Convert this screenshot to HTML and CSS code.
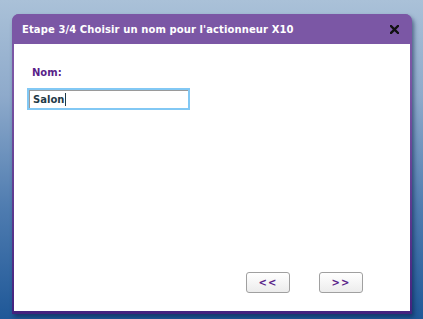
FILE: index.html
```html
<!DOCTYPE html>
<html>
<head>
<meta charset="utf-8">
<link rel="stylesheet" href="styles.css">
</head>
<body>
<div class="dialog">
  <div class="titlebar">
    <span class="title">Etape 3/4 Choisir un nom pour l'actionneur X10</span>
    <svg class="close" width="9" height="9" viewBox="0 0 9 9"><path d="M1 1L8 8M8 1L1 8" stroke="#111" stroke-width="2.4" stroke-linecap="square"/></svg>
  </div>
  <div class="content">
    <div class="form">
      <label class="label">Nom:</label>
      <div class="input"><span class="value">Salon</span><span class="caret"></span></div>
    </div>
    <div class="buttons">
      <button class="btn">&lt;&lt;</button>
      <button class="btn">&gt;&gt;</button>
    </div>
  </div>
</div>
</body>
</html>
```
FILE: styles.css
```css
html, body {
  margin: 0;
  padding: 0;
  width: 423px;
  height: 319px;
  overflow: hidden;
}
body {
  background: linear-gradient(to bottom, #aac1d8 0%, #8eaacb 30%, #4f7cb0 65%, #1f5898 100%);
  font-family: "DejaVu Sans", Verdana, sans-serif;
  padding: 14px 11px 0 12px;
  box-sizing: border-box;
}
.dialog {
  width: 400px;
  height: 300px;
  border-radius: 7px 7px 0 0;
  box-sizing: border-box;
  padding: 0 2px 3px 2px;
  display: flex;
  flex-direction: column;
  box-shadow: 2px 3px 4px rgba(10, 30, 70, 0.55);
  background: linear-gradient(to bottom, #7b57a5 0%, #7b57a5 20%, #43237f 100%);
}
.titlebar {
  height: 30px;
  display: flex;
  align-items: center;
  justify-content: space-between;
  padding: 0 13px 0 10px;
  background: #7b57a5;
  margin: 0 -2px;
  border-radius: 7px 7px 0 0;
}
.title {
  color: #ffffff;
  font-weight: bold;
  font-size: 10px;
  letter-spacing: 0.1px;
}
.close {
  display: block;
}
.content {
  flex: 1;
  background: #ffffff;
  display: flex;
  flex-direction: column;
  justify-content: space-between;
}
.form {
  padding: 23px 0 0 13px;
  display: flex;
  flex-direction: column;
}
.label {
  color: #5a1f8a;
  font-weight: bold;
  font-size: 10px;
  padding-left: 5px;
  margin-bottom: 10px;
}
.input {
  width: 155px;
  height: 18px;
  border: 2px solid #82c8f4;
  box-shadow: inset 1px 1px 0 #9a9a9a;
  display: flex;
  align-items: center;
  padding-left: 4px;
}
.value {
  color: #1f3a48;
  font-weight: bold;
  font-size: 10px;
}
.caret {
  width: 1px;
  height: 13px;
  background: #1f3a48;
  margin-left: 1px;
}
.buttons {
  display: flex;
  justify-content: flex-end;
  gap: 29px;
  padding: 0 47px 18px 0;
}
.btn {
  width: 44px;
  height: 21px;
  border: 1px solid #a0a0a0;
  border-radius: 3px;
  background: linear-gradient(to bottom, #ffffff, #ececec);
  color: #5a1f8a;
  font-family: "DejaVu Sans", Verdana, sans-serif;
  font-weight: bold;
  font-size: 10px;
  padding: 0;
  letter-spacing: 1px;
}
```
